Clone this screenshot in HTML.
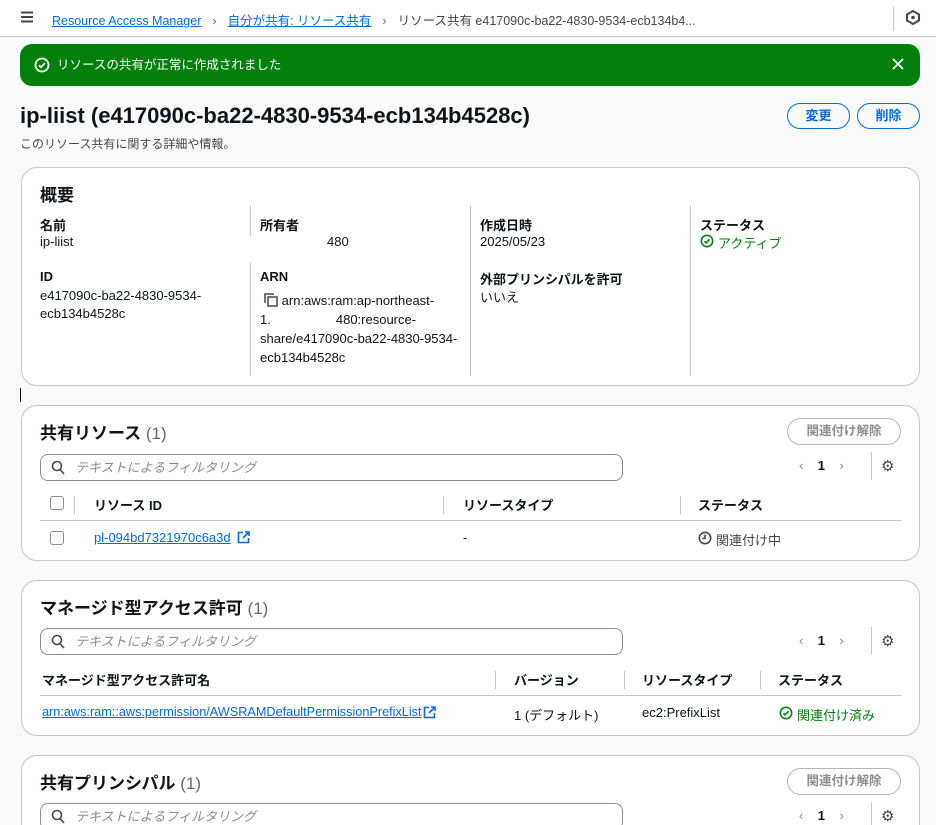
<!DOCTYPE html>
<html><head><meta charset="utf-8"><style>
*{box-sizing:border-box;margin:0;padding:0}
html,body{width:936px;height:825px;overflow:hidden}
body{background:#fff;font-family:"Liberation Sans","Noto Sans CJK JP",sans-serif;color:#0f141a;font-size:13px;position:relative}
.a{position:absolute;white-space:nowrap}
.card{position:absolute;left:21px;width:899px;background:#fff;border:1px solid #c6c6cd;border-radius:16px}
.lbl{font-weight:bold;font-size:13px}
.link{color:#006ce0;text-decoration:underline}
.btn{position:absolute;border:1.5px solid #006ce0;color:#006ce0;border-radius:18px;font-weight:bold;font-size:13px;text-align:center;line-height:23px;height:26px}
.btng{position:absolute;border:1.5px solid #b4b4bb;color:#8c8c94;border-radius:18px;font-weight:bold;font-size:12.5px;text-align:center;line-height:24px;height:27px;width:114px}
.search{position:absolute;left:18px;width:583px;height:27px;border:1px solid #8c8c94;border-radius:8px;color:#8c8c94;font-style:italic;font-size:13px;line-height:25px;padding-left:34px}
.vd{position:absolute;width:1px;background:#c6c6cd}
.th{font-weight:bold;font-size:13px}
.ttl{font-size:17px;font-weight:bold}
svg{position:absolute}
</style></head><body>
<div class="a" style="left:0;top:0;width:936px;height:37px;border-bottom:1px solid #c6c6cd;background:#fff"></div>
<div class="a" style="left:0;top:37px;width:936px;height:788px;background:#fafafa"></div>
<svg style="left:20px;top:11px" width="14" height="12" viewBox="0 0 14 12"><path d="M1 1.5h12M1 6h12M1 10.5h12" stroke="#424650" stroke-width="2"/></svg>
<div class="a" style="left:52px;top:10px;font-size:12.5px"><span class="link">Resource Access Manager</span><span style="color:#656871;margin:0 11px">›</span><span class="link">自分が共有: リソース共有</span><span style="color:#656871;margin:0 11px">›</span><span style="color:#424650">リソース共有 e417090c-ba22-4830-9534-ecb134b4...</span></div>
<div class="a" style="left:893px;top:7px;width:1px;height:24px;background:#c6c6cd"></div>
<svg style="left:906px;top:10px" width="14" height="15" viewBox="0 0 14 15"><path d="M7 1L13 4.5V10.5L7 14L1 10.5V4.5Z" fill="none" stroke="#424650" stroke-width="2"/><circle cx="7" cy="7.5" r="1.8" fill="#424650"/></svg>

<div class="a" style="left:20px;top:44px;width:900px;height:42px;background:#037f0c;border-radius:12px;color:#fff;font-size:12.5px;line-height:42px;padding-left:37px">リソースの共有が正常に作成されました</div>
<svg style="left:34px;top:57px" width="16" height="16" viewBox="0 0 16 16"><circle cx="8" cy="8" r="6.5" fill="none" stroke="#fff" stroke-width="1.8"/><path d="M5 8.2l2 2 4-4.2" fill="none" stroke="#fff" stroke-width="1.8"/></svg>
<svg style="left:892px;top:58px" width="12" height="12" viewBox="0 0 12 12"><path d="M1 1l10 10M11 1L1 11" stroke="#fff" stroke-width="1.8"/></svg>

<div class="a" style="left:20px;top:103px;font-size:22px;font-weight:bold">ip-liist (e417090c-ba22-4830-9534-ecb134b4528c)</div>
<div class="a" style="left:20px;top:135px;font-size:12px;color:#424650">このリソース共有に関する詳細や情報。</div>
<div class="btn" style="left:787px;top:103px;width:63px">変更</div>
<div class="btn" style="left:857px;top:103px;width:63px">削除</div>

<div class="card" style="top:167px;height:219px">
<div class="a ttl" style="left:18px;top:13px">概要</div>
<div class="vd" style="left:228px;top:38px;height:30px"></div>
<div class="vd" style="left:448px;top:38px;height:170px"></div>
<div class="vd" style="left:668px;top:38px;height:170px"></div>
<div class="vd" style="left:228px;top:95px;height:113px"></div>
<div class="a lbl" style="left:18px;top:47px">名前</div><div class="a" style="left:18px;top:66px">ip-liist</div>
<div class="a lbl" style="left:238px;top:47px">所有者</div><div class="a" style="left:305px;top:66px">480</div>
<div class="a lbl" style="left:458px;top:47px">作成日時</div><div class="a" style="left:458px;top:66px">2025/05/23</div>
<div class="a lbl" style="left:678px;top:47px">ステータス</div>
<svg style="left:678px;top:66px" width="14" height="14" viewBox="0 0 16 16"><circle cx="8" cy="8" r="6.5" fill="none" stroke="#037f0c" stroke-width="1.8"/><path d="M5 8.2l2 2 4-4.2" fill="none" stroke="#037f0c" stroke-width="1.8"/></svg>
<div class="a" style="left:696px;top:65px;color:#037f0c">アクティブ</div>
<div class="a lbl" style="left:18px;top:101px">ID</div><div class="a" style="left:18px;top:119px;line-height:18px">e417090c-ba22-4830-9534-<br>ecb134b4528c</div>
<div class="a lbl" style="left:238px;top:101px">ARN</div>
<svg style="left:242px;top:125px" width="14" height="14" viewBox="0 0 14 14"><rect x="4" y="4" width="9" height="9" fill="none" stroke="#424650" stroke-width="1.5"/><path d="M1 10V1h9" fill="none" stroke="#424650" stroke-width="1.5"/></svg>
<div class="a" style="left:238px;top:123px;line-height:19px">&nbsp;&nbsp;&nbsp;&nbsp;&nbsp;&nbsp;arn:aws:ram:ap-northeast-<br>1.&nbsp;&nbsp;&nbsp;&nbsp;&nbsp;&nbsp;&nbsp;&nbsp;&nbsp;&nbsp;&nbsp;&nbsp;&nbsp;&nbsp;&nbsp;&nbsp;&nbsp;&nbsp;480:resource-<br>share/e417090c-ba22-4830-9534-<br>ecb134b4528c</div>
<div class="a lbl" style="left:458px;top:101px">外部プリンシパルを許可</div><div class="a" style="left:458px;top:119px">いいえ</div>
</div>
<div class="a" style="left:20px;top:388px;width:1px;height:14px;background:#000"></div>

<div class="card" style="top:405px;height:156px">
<div class="a ttl" style="left:18px;top:13px">共有リソース <span style="font-weight:normal;color:#656871">(1)</span></div>
<div class="btng" style="left:765px;top:12px">関連付け解除</div>
<div class="search" style="top:48px">テキストによるフィルタリング</div>
<svg style="left:29px;top:54px" width="14" height="15" viewBox="0 0 14 15"><circle cx="6" cy="6" r="4.5" fill="none" stroke="#424650" stroke-width="1.6"/><path d="M9 9.5l4 4.5" stroke="#424650" stroke-width="1.6"/></svg>
<div class="a" style="left:777px;top:52px;color:#8c8c94">‹&nbsp;&nbsp;&nbsp;&nbsp;<b style="color:#0f141a">1</b>&nbsp;&nbsp;&nbsp;&nbsp;›</div>
<div class="vd" style="left:849px;top:46px;height:28px"></div>
<div class="a" style="left:859px;top:51px;font-size:15px;color:#424650">⚙</div>
<div class="a" style="left:28px;top:90px;width:14px;height:14px;border:1.5px solid #8c8c94;border-radius:3px"></div>
<div class="vd" style="left:52px;top:90px;height:18px"></div>
<div class="a th" style="left:72px;top:89px">リソース ID</div>
<div class="vd" style="left:421px;top:90px;height:18px"></div>
<div class="a th" style="left:441px;top:89px">リソースタイプ</div>
<div class="vd" style="left:658px;top:90px;height:18px"></div>
<div class="a th" style="left:676px;top:89px">ステータス</div>
<div class="a" style="left:18px;top:114px;width:862px;height:1px;background:#c6c6cd"></div>
<div class="a" style="left:28px;top:125px;width:14px;height:14px;border:1.5px solid #8c8c94;border-radius:3px"></div>
<div class="a" style="left:72px;top:124px"><span class="link">pl-094bd7321970c6a3d</span></div>
<svg style="left:215px;top:125px" width="13" height="13" viewBox="0 0 13 13"><path d="M6 1.5H1.5v10h10V7M8 1h4v4M12 1L6 7" fill="none" stroke="#006ce0" stroke-width="1.6"/></svg>
<div class="a" style="left:441px;top:124px">-</div>
<svg style="left:676px;top:125px" width="14" height="14" viewBox="0 0 16 16"><circle cx="8" cy="8" r="6.5" fill="none" stroke="#424650" stroke-width="1.8"/><path d="M8 4v4.5H5" fill="none" stroke="#424650" stroke-width="1.8"/></svg>
<div class="a" style="left:694px;top:124px;color:#424650">関連付け中</div>
</div>

<div class="card" style="top:580px;height:156px">
<div class="a ttl" style="left:18px;top:13px">マネージド型アクセス許可 <span style="font-weight:normal;color:#656871">(1)</span></div>
<div class="search" style="top:47px">テキストによるフィルタリング</div>
<svg style="left:29px;top:53px" width="14" height="15" viewBox="0 0 14 15"><circle cx="6" cy="6" r="4.5" fill="none" stroke="#424650" stroke-width="1.6"/><path d="M9 9.5l4 4.5" stroke="#424650" stroke-width="1.6"/></svg>
<div class="a" style="left:777px;top:52px;color:#8c8c94">‹&nbsp;&nbsp;&nbsp;&nbsp;<b style="color:#0f141a">1</b>&nbsp;&nbsp;&nbsp;&nbsp;›</div>
<div class="vd" style="left:849px;top:46px;height:28px"></div>
<div class="a" style="left:859px;top:51px;font-size:15px;color:#424650">⚙</div>
<div class="a th" style="left:20px;top:89px">マネージド型アクセス許可名</div>
<div class="vd" style="left:473px;top:90px;height:18px"></div>
<div class="a th" style="left:492px;top:89px">バージョン</div>
<div class="vd" style="left:602px;top:90px;height:18px"></div>
<div class="a th" style="left:620px;top:89px">リソースタイプ</div>
<div class="vd" style="left:738px;top:90px;height:18px"></div>
<div class="a th" style="left:756px;top:89px">ステータス</div>
<div class="a" style="left:18px;top:114px;width:862px;height:1px;background:#c6c6cd"></div>
<div class="a" style="left:20px;top:124px;font-size:12.7px"><span class="link">arn:aws:ram::aws:permission/AWSRAMDefaultPermissionPrefixList</span></div>
<svg style="left:401px;top:125px" width="13" height="13" viewBox="0 0 13 13"><path d="M6 1.5H1.5v10h10V7M8 1h4v4M12 1L6 7" fill="none" stroke="#006ce0" stroke-width="1.6"/></svg>
<div class="a" style="left:492px;top:124px">1 (デフォルト)</div>
<div class="a" style="left:620px;top:124px">ec2:PrefixList</div>
<svg style="left:757px;top:125px" width="14" height="14" viewBox="0 0 16 16"><circle cx="8" cy="8" r="6.5" fill="none" stroke="#037f0c" stroke-width="1.8"/><path d="M5 8.2l2 2 4-4.2" fill="none" stroke="#037f0c" stroke-width="1.8"/></svg>
<div class="a" style="left:775px;top:124px;color:#037f0c">関連付け済み</div>
</div>

<div class="card" style="top:755px;height:100px">
<div class="a ttl" style="left:18px;top:13px">共有プリンシパル <span style="font-weight:normal;color:#656871">(1)</span></div>
<div class="btng" style="left:765px;top:12px">関連付け解除</div>
<div class="search" style="top:47px">テキストによるフィルタリング</div>
<svg style="left:29px;top:53px" width="14" height="15" viewBox="0 0 14 15"><circle cx="6" cy="6" r="4.5" fill="none" stroke="#424650" stroke-width="1.6"/><path d="M9 9.5l4 4.5" stroke="#424650" stroke-width="1.6"/></svg>
<div class="a" style="left:777px;top:52px;color:#8c8c94">‹&nbsp;&nbsp;&nbsp;&nbsp;<b style="color:#0f141a">1</b>&nbsp;&nbsp;&nbsp;&nbsp;›</div>
<div class="vd" style="left:849px;top:46px;height:28px"></div>
<div class="a" style="left:859px;top:51px;font-size:15px;color:#424650">⚙</div>
</div>
</body></html>
